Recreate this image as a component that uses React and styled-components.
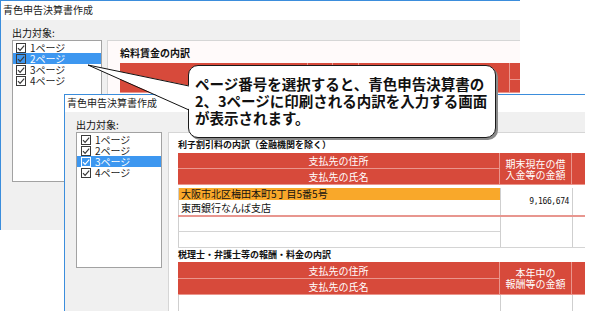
import React from 'react';
import styled, { createGlobalStyle } from 'styled-components';

const GlobalStyle = createGlobalStyle`
  html, body { margin: 0; padding: 0; background: #fff; }
  body { font-family: "Noto Sans CJK JP", "Noto Sans", sans-serif; }
  * { box-sizing: border-box; }
`;

const Canvas = styled.div`
  position: relative;
  width: 595px;
  height: 322px;
  overflow: hidden;
  background: #fff;
`;

const Window = styled.div`
  position: absolute;
  left: ${(p) => p.$x}px;
  top: ${(p) => p.$y}px;
  width: ${(p) => p.$w}px;
  height: ${(p) => p.$h}px;
  border-left: 1px solid #3b8ddc;
  border-top: 1px solid #3b8ddc;
  display: flex;
  flex-direction: column;
  overflow: hidden;
  background: #f0f0f0;
`;

const TitleBar = styled.div`
  height: ${(p) => p.$h}px;
  flex: none;
  background: #fff;
  color: #222;
  font-size: 10px;
  line-height: 12px;
  padding: 0 0 1px 2px;
  display: flex;
  align-items: center;
  white-space: nowrap;
`;

const Body = styled.div`
  flex: 1;
  min-height: 0;
  display: grid;
  grid-template-columns: ${(p) => p.$listW}px max-content;
  grid-template-rows: 14px auto;
  align-items: start;
  column-gap: ${(p) => p.$gap}px;
  padding: 6px 0 0 11px;
`;

const FieldLabel = styled.div`
  grid-column: 1 / 3;
  font-size: 10px;
  line-height: 14px;
  color: #111;
  white-space: nowrap;
`;

const ListBox = styled.div`
  width: ${(p) => p.$w}px;
  height: ${(p) => p.$h}px;
  background: #fff;
  border: 1px solid #a2a2a2;
  padding: 1px 0 0 0;
`;

const ListItem = styled.div`
  height: 11px;
  display: flex;
  align-items: center;
  gap: 4px;
  padding-left: ${(p) => p.$indent}px;
  font-size: 10px;
  line-height: 11px;
  color: ${(p) => (p.$sel ? '#fff' : '#222')};
  background: ${(p) => (p.$sel ? '#3d97f0' : 'transparent')};
  white-space: nowrap;
`;

const CheckSvg = styled.svg`
  width: 10px;
  height: 10px;
  flex: none;
`;

const Panel = styled.div`
  background: ${(p) => p.$bg};
  border-left: 1px solid #d6d6d6;
  border-top: 1px solid #d6d6d6;
  padding: ${(p) => p.$pad};
  height: ${(p) => p.$h}px;
`;

const Heading = styled.div`
  font-size: ${(p) => p.$size}px;
  line-height: ${(p) => p.$lh}px;
  font-weight: 700;
  color: #111;
  white-space: nowrap;
  margin: ${(p) => p.$m};
`;

const RedGrid = styled.div`
  display: grid;
  grid-template-columns: ${(p) => p.$cols};
  grid-template-rows: ${(p) => p.$rows};
  background: #d74a3b;
`;

const HeadCell = styled.div`
  grid-row: ${(p) => p.$row || 'auto'};
  grid-column: ${(p) => p.$col || 'auto'};
  border-right: 1px solid #ea958c;
  border-bottom: 1px solid #ea958c;
  color: #fff;
  font-size: 10px;
  line-height: 11px;
  display: flex;
  align-items: center;
  justify-content: center;
  text-align: center;
  white-space: nowrap;
`;

const BodyGrid = styled.div`
  display: grid;
  grid-template-columns: ${(p) => p.$cols};
  grid-template-rows: ${(p) => p.$rows};
  border-bottom: ${(p) => p.$bottom};
  margin-top: ${(p) => p.$mt || 0}px;
  background: #fff;
`;

const DataCell = styled.div`
  grid-row: ${(p) => p.$row || 'auto'};
  grid-column: ${(p) => p.$col || 'auto'};
  background: ${(p) => p.$bg || '#fff'};
  border-left: 1px solid #cfcfcf;
  border-bottom: ${(p) => (p.$line ? '1px solid #d4d4d4' : 'none')};
  font-size: 10px;
  line-height: 12px;
  color: #111;
  padding: 0 2px;
  display: flex;
  align-items: center;
  justify-content: ${(p) => (p.$right ? 'flex-end' : 'flex-start')};
  white-space: nowrap;
`;

const Amount = styled.span`
  font-family: "DejaVu Sans Mono", "Liberation Mono", monospace;
  font-size: 8px;
  letter-spacing: -0.4px;
  padding-right: 1px;
`;

const Callout = styled.div`
  position: absolute;
  left: 188px;
  top: 65px;
  width: 308px;
  height: 73px;
  background: #fff;
  border: 1px solid #1a1a1a;
  border-radius: 10px;
  box-shadow: 2px 2px 0 #8a8a8a;
  padding: 9px 0 0 6px;
  font-size: 14.5px;
  line-height: 17px;
  font-weight: 700;
  color: #111;
  white-space: nowrap;
`;

const TailSvg = styled.svg`
  position: absolute;
  left: 0;
  top: 0;
  width: 595px;
  height: 322px;
  pointer-events: none;
`;

const Check = ({ light }) => (
  <CheckSvg viewBox="0 0 10 10">
    <rect x="0.5" y="0.5" width="9" height="9" fill="none" stroke={light ? '#fff' : '#3a3a3a'} />
    <path d="M2 5.2 L4.1 7.4 L8.2 2.6" fill="none" stroke={light ? '#fff' : '#3a3a3a'} strokeWidth="1.2" />
  </CheckSvg>
);

const PAGES = ['1ページ', '2ページ', '3ページ', '4ページ'];

function PageList({ selected, w, h, indent, lightSel }) {
  return (
    <ListBox $w={w} $h={h}>
      {PAGES.map((t, i) => (
        <ListItem key={t} $sel={i === selected} $indent={indent}>
          <Check light={lightSel && i === selected} />
          <span>{t}</span>
        </ListItem>
      ))}
    </ListBox>
  );
}

const TABLE_COLS = '322px 72px 60px';

function BackWindow() {
  return (
    <Window $x={0} $y={0} $w={520} $h={230}>
      <TitleBar $h={19}>青色申告決算書作成</TitleBar>
      <Body $listW={90} $gap={5}>
        <FieldLabel>出力対象:</FieldLabel>
        <PageList selected={1} w={90} h={142} indent={3} />
        <Panel $bg="#fffafa" $pad="5px 0 0 12px" $h={190}>
          <Heading $size={10} $lh={14} $m="0 0 3px 0">給料賃金の内訳</Heading>
          <RedGrid $cols="188px 25px 26px 151px 60px" $rows="17px 13px">
            <HeadCell $row="1 / 3" />
            <HeadCell $row="1 / 3" />
            <HeadCell $row="1 / 3" />
            <HeadCell $row="1 / 3" />
            <HeadCell />
            <HeadCell $col="5" />
          </RedGrid>
        </Panel>
      </Body>
    </Window>
  );
}

function FrontWindow() {
  return (
    <Window $x={64} $y={94} $w={521} $h={217}>
      <TitleBar $h={17}>青色申告決算書作成</TitleBar>
      <Body $listW={86} $gap={6}>
        <FieldLabel>出力対象:</FieldLabel>
        <PageList selected={2} w={86} h={136} indent={4} lightSel />
        <Panel $bg="#fff" $pad="6px 0 0 9px" $h={190}>
          <Heading $size={9} $lh={12} $m="0 0 2px 0">利子割引料の内訳（金融機関を除く）</Heading>
          <RedGrid $cols={TABLE_COLS} $rows="16px 16px">
            <HeadCell $row="1" $col="1">支払先の住所</HeadCell>
            <HeadCell $row="2" $col="1">支払先の氏名</HeadCell>
            <HeadCell $row="1 / 3" $col="2">期末現在の借<br />入金等の金額</HeadCell>
            <HeadCell $row="1 / 3" $col="3" />
          </RedGrid>
          <BodyGrid $cols={TABLE_COLS} $rows="12px 15px" $bottom="2px solid #e8968f" $mt={3}>
            <DataCell $row="1" $col="1" $bg="#f9a82a">大阪市北区梅田本町5丁目5番5号</DataCell>
            <DataCell $row="2" $col="1">東西銀行なんば支店</DataCell>
            <DataCell $row="1 / 3" $col="2" $right><Amount>9,166,674</Amount></DataCell>
            <DataCell $row="1 / 3" $col="3" />
          </BodyGrid>
          <BodyGrid $cols={TABLE_COLS} $rows="15px 15px" $bottom="1px solid #d4d4d4">
            <DataCell $row="1" $col="1" $line />
            <DataCell $row="2" $col="1" />
            <DataCell $row="1 / 3" $col="2" />
            <DataCell $row="1 / 3" $col="3" />
          </BodyGrid>
          <Heading $size={9} $lh={12} $m="1px 0 1px 0">税理士・弁護士等の報酬・料金の内訳</Heading>
          <RedGrid $cols={TABLE_COLS} $rows="17px 16px">
            <HeadCell $row="1" $col="1">支払先の住所</HeadCell>
            <HeadCell $row="2" $col="1">支払先の氏名</HeadCell>
            <HeadCell $row="1 / 3" $col="2">本年中の<br />報酬等の金額</HeadCell>
            <HeadCell $row="1 / 3" $col="3" />
          </RedGrid>
          <BodyGrid $cols={TABLE_COLS} $rows="16px" $bottom="1px solid #d4d4d4">
            <DataCell $col="1" />
            <DataCell $col="2" />
            <DataCell $col="3" />
          </BodyGrid>
        </Panel>
      </Body>
    </Window>
  );
}

export default function App() {
  return (
    <Canvas>
      <GlobalStyle />
      <BackWindow />
      <FrontWindow />
      <Callout>
        ページ番号を選択すると、青色申告決算書の<br />
        2、3ページに印刷される内訳を入力する画面<br />
        が表示されます。
      </Callout>
      <TailSvg viewBox="0 0 595 322">
        <polygon points="88,65 191,86 191,110" fill="#fff" />
        <line x1="88" y1="65" x2="189" y2="86" stroke="#111" strokeWidth="1" />
        <line x1="88" y1="65" x2="189" y2="110" stroke="#111" strokeWidth="1" />
      </TailSvg>
    </Canvas>
  );
}
